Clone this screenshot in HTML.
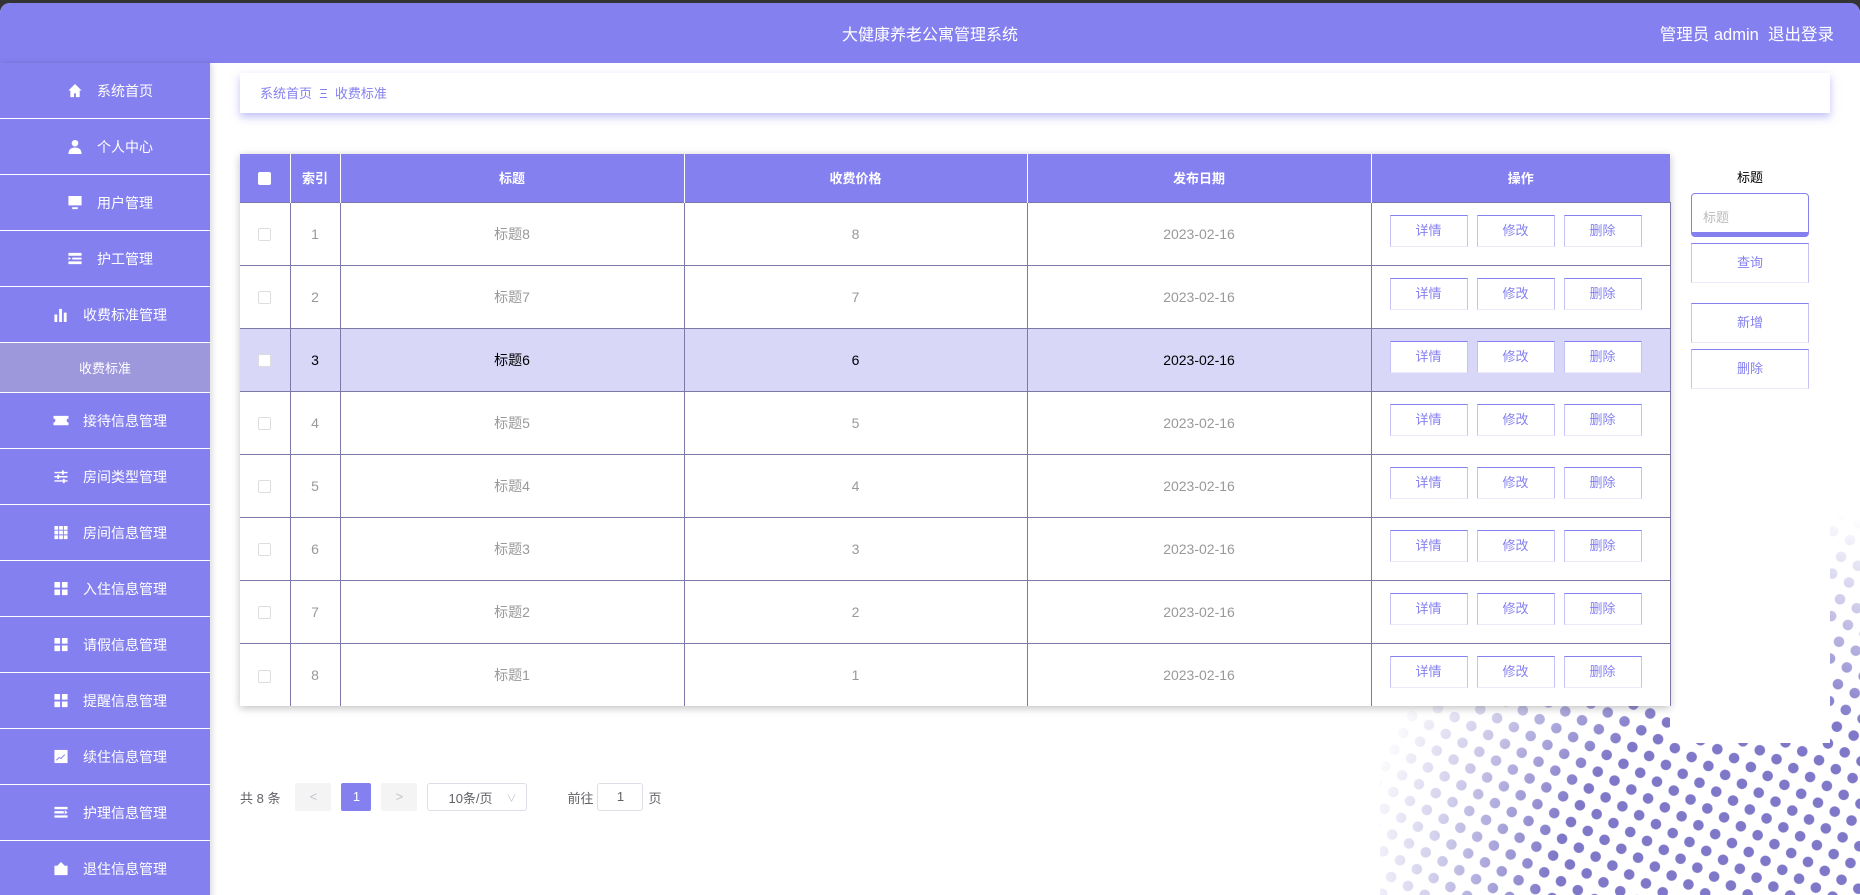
<!DOCTYPE html>
<html><head><meta charset="utf-8">
<style>
*{box-sizing:border-box;margin:0;padding:0}
body{width:1860px;height:895px;overflow:hidden;background:#333;font-family:"Liberation Sans","Noto Sans CJK SC",sans-serif;position:relative}
#page{position:absolute;left:0;top:3px;width:1860px;height:892px;background:#fff;border-radius:10px 10px 0 0;overflow:hidden}
#hdr{position:absolute;left:0;top:0;width:1860px;height:60px;background:#8580f0;color:#fff}
#hdr .t{position:absolute;left:0;right:0;top:18px;text-align:center;font-size:16px}
#hdr .u{position:absolute;right:26px;top:18px;font-size:16.5px}
#side{position:absolute;left:0;top:60px;width:210px;height:840px;background:#8580f0;box-shadow:2px 0 6px rgba(0,0,0,.15);z-index:2}
.it{height:56px;border-bottom:1.5px solid #fff;color:#fff;font-size:14px;display:flex;align-items:center;justify-content:center;gap:14px;padding-left:10px}
.it.sub{height:50px;background:#9d97dc;font-size:13px;padding-left:0}
.ic{width:16px;height:15px;display:inline-block;fill:#fff}
#bc{position:absolute;left:240px;top:70px;width:1590px;height:40px;background:#fff;box-shadow:0 4px 8px rgba(133,128,240,.5);font-size:13px;color:#8580f0;padding:10px 20px}
#tbl{position:absolute;left:240px;top:151px;width:1430px;box-shadow:0 2px 8px rgba(0,0,0,.25);background:#fff;z-index:3}
table{border-collapse:collapse;width:1430px;table-layout:fixed}
th{background:#8580f0;color:#fff;height:48px;font-size:13px;font-weight:bold;border-right:1.5px solid #fff}
td{height:63px;border-top:1.5px solid #7c78a8;border-right:1.5px solid #7c78a8;text-align:center;color:#999;font-size:14px}
td.op{padding-right:10px;padding-bottom:6px}
tr.hl td{background:#d9d7f8;color:#000}
.cb{display:inline-block;width:13px;height:13px;border:1px solid #ddd;border-radius:2px;background:#fff;vertical-align:middle}
th .cb{border:none}
.b{display:inline-block;width:78px;height:32px;line-height:30px;border:1px solid #8580f0;border-bottom-color:#ece9fb;border-left-color:#c5c2f6;border-right-color:#c5c2f6;color:#8580f0;font-size:13px;margin:0 4.5px;background:#fff}
#rp{position:absolute;left:1670px;top:140px;width:160px;height:600px;background:#fff;z-index:2}
#rp .lb{position:absolute;top:24px;width:160px;text-align:center;font-size:13px;color:#000}
#rp .in{position:absolute;left:21px;top:50px;width:118px;height:44px;border:1px solid #8580f0;border-bottom:5px solid #8580f0;border-radius:4px;color:#bbb;font-size:13px;padding:13px 11px}
#rp .bt{position:absolute;left:21px;width:118px;height:40px;line-height:38px;text-align:center;border:1px solid #8580f0;border-bottom-color:#ece9fb;border-left-color:#c5c2f6;border-right-color:#c5c2f6;color:#8580f0;font-size:13px}
#pg{position:absolute;left:240px;top:780px;font-size:13px;color:#606266;display:flex;align-items:center}
.pb{width:36px;height:28px;background:#f4f4f5;color:#c0c4cc;text-align:center;line-height:28px;border-radius:2px}
#dots{position:absolute;left:1380px;top:470px;width:480px;height:425px;z-index:1;-webkit-mask-image:radial-gradient(circle at 370px 430px,#000 0,#000 200px,rgba(0,0,0,.35) 320px,transparent 400px)}
</style></head><body>
<div id="page">
<div id="hdr"><div class="t">大健康养老公寓管理系统</div><div class="u">管理员 admin &nbsp;退出登录</div></div>
<div id="side">
<div class="it"><svg class="ic" viewBox="0 0 16 16"><path d="M8 1L1 8h2v7h4v-4h2v4h4V8h2z"/></svg>系统首页</div>
<div class="it"><svg class="ic" viewBox="0 0 16 16"><circle cx="8" cy="4.5" r="3.5"/><path d="M1 16c0-5 3-7 7-7s7 2 7 7z"/></svg>个人中心</div>
<div class="it"><svg class="ic" viewBox="0 0 16 16"><path d="M1 1h14v10H1zM5 13h6v2H5z"/></svg>用户管理</div>
<div class="it"><svg class="ic" viewBox="0 0 16 16"><path d="M1 2h14v3H1zM5 7h10v2H5zM1 11h14v3H1zM1 6.5l3 1.5-3 1.5z"/></svg>护工管理</div>
<div class="it"><svg class="ic" viewBox="0 0 16 16"><path d="M1 8h3v8H1zM6 2h3v14H6zM11 6h3v10h-3z"/></svg>收费标准管理</div>
<div class="it sub">收费标准</div>
<div class="it"><svg class="ic" viewBox="0 0 16 16"><path d="M0 3h16v3a2 2 0 000 4v3H0v-3a2 2 0 000-4z"/></svg>接待信息管理</div>
<div class="it"><svg class="ic" viewBox="0 0 16 16"><path d="M1 3h14v1.5H1zM1 7.5h14V9H1zM1 12h14v1.5H1zM9 1.5h2v4.5H9zM4 6h2v4.5H4zM10 10.5h2V15h-2z"/></svg>房间类型管理</div>
<div class="it"><svg class="ic" viewBox="0 0 16 16"><path d="M1 1h4v4H1zM6 1h4v4H6zM11 1h4v4h-4zM1 6h4v4H1zM6 6h4v4H6zM11 6h4v4h-4zM1 11h4v4H1zM6 11h4v4H6zM11 11h4v4h-4z"/></svg>房间信息管理</div>
<div class="it"><svg class="ic" viewBox="0 0 16 16"><path d="M1 1h6v6H1zM9 1h6v6H9zM1 9h6v6H1zM9 9h6v6H9z"/></svg>入住信息管理</div>
<div class="it"><svg class="ic" viewBox="0 0 16 16"><path d="M1 1h6v6H1zM9 1h6v6H9zM1 9h6v6H1zM9 9h6v6H9z"/></svg>请假信息管理</div>
<div class="it"><svg class="ic" viewBox="0 0 16 16"><path d="M1 1h6v6H1zM9 1h6v6H9zM1 9h6v6H1zM9 9h6v6H9z"/></svg>提醒信息管理</div>
<div class="it"><svg class="ic" viewBox="0 0 16 16"><path d="M1 1h14v14H1z"/><path d="M3 12l3-3 2 1 4-4" stroke="#8580f0" fill="none"/></svg>续住信息管理</div>
<div class="it"><svg class="ic" viewBox="0 0 16 16"><path d="M1 2h14v2.5H1zM1 6.5h10V9H1zM1 11h14v2.5H1zM12 5.5l3 2.3-3 2.3z"/></svg>护理信息管理</div>
<div class="it"><svg class="ic" viewBox="0 0 16 16"><path d="M1 5h14v10H1zM8 1l4 4H4z"/></svg>退住信息管理</div>
</div>
<div id="bc">系统首页 &nbsp;Ξ&nbsp; 收费标准</div>
<div id="tbl"><table>
<colgroup><col style="width:50px"><col style="width:50px"><col style="width:344px"><col style="width:343px"><col style="width:344px"><col style="width:299px"></colgroup>
<tr><th><span class="cb"></span></th><th>索引</th><th>标题</th><th>收费价格</th><th>发布日期</th><th style="border-right:none">操作</th></tr>
<tr><td><span class="cb"></span></td><td>1</td><td>标题8</td><td>8</td><td>2023-02-16</td><td class="op"><span class="b">详情</span><span class="b">修改</span><span class="b">删除</span></td></tr>
<tr><td><span class="cb"></span></td><td>2</td><td>标题7</td><td>7</td><td>2023-02-16</td><td class="op"><span class="b">详情</span><span class="b">修改</span><span class="b">删除</span></td></tr>
<tr class="hl"><td><span class="cb"></span></td><td>3</td><td>标题6</td><td>6</td><td>2023-02-16</td><td class="op"><span class="b">详情</span><span class="b">修改</span><span class="b">删除</span></td></tr>
<tr><td><span class="cb"></span></td><td>4</td><td>标题5</td><td>5</td><td>2023-02-16</td><td class="op"><span class="b">详情</span><span class="b">修改</span><span class="b">删除</span></td></tr>
<tr><td><span class="cb"></span></td><td>5</td><td>标题4</td><td>4</td><td>2023-02-16</td><td class="op"><span class="b">详情</span><span class="b">修改</span><span class="b">删除</span></td></tr>
<tr><td><span class="cb"></span></td><td>6</td><td>标题3</td><td>3</td><td>2023-02-16</td><td class="op"><span class="b">详情</span><span class="b">修改</span><span class="b">删除</span></td></tr>
<tr><td><span class="cb"></span></td><td>7</td><td>标题2</td><td>2</td><td>2023-02-16</td><td class="op"><span class="b">详情</span><span class="b">修改</span><span class="b">删除</span></td></tr>
<tr><td><span class="cb"></span></td><td>8</td><td>标题1</td><td>1</td><td>2023-02-16</td><td class="op"><span class="b">详情</span><span class="b">修改</span><span class="b">删除</span></td></tr>
</table></div>
<div id="rp"><div class="lb">标题</div><div class="in">标题</div>
<div class="bt" style="top:100px">查询</div><div class="bt" style="top:160px">新增</div><div class="bt" style="top:206px">删除</div></div>
<div id="pg"><span>共 8 条</span>
<span class="pb" style="margin-left:15px">&lt;</span>
<span class="pb" style="margin-left:10px;width:30px;background:#8580f0;color:#fff">1</span>
<span class="pb" style="margin-left:10px">&gt;</span>
<span style="margin-left:10px;width:100px;height:28px;border:1px solid #dcdfe6;border-radius:3px;display:inline-flex;align-items:center;justify-content:space-between;padding:0 10px 0 20px">10条/页<span style="color:#c0c4cc;font-size:10px">∨</span></span>
<span style="margin-left:40px">前往</span>
<span style="margin-left:4px;width:46px;height:28px;border:1px solid #dcdfe6;border-radius:3px;text-align:center;line-height:26px">1</span>
<span style="margin-left:5px">页</span></div>
<svg id="dots" width="480" height="425"><defs><pattern id="p" width="19" height="19" patternUnits="userSpaceOnUse" patternTransform="rotate(28)"><circle cx="9.5" cy="9.5" r="5.3" fill="#7f78c8"/></pattern></defs><rect width="480" height="425" fill="url(#p)"/></svg>
</div>
</body></html>
